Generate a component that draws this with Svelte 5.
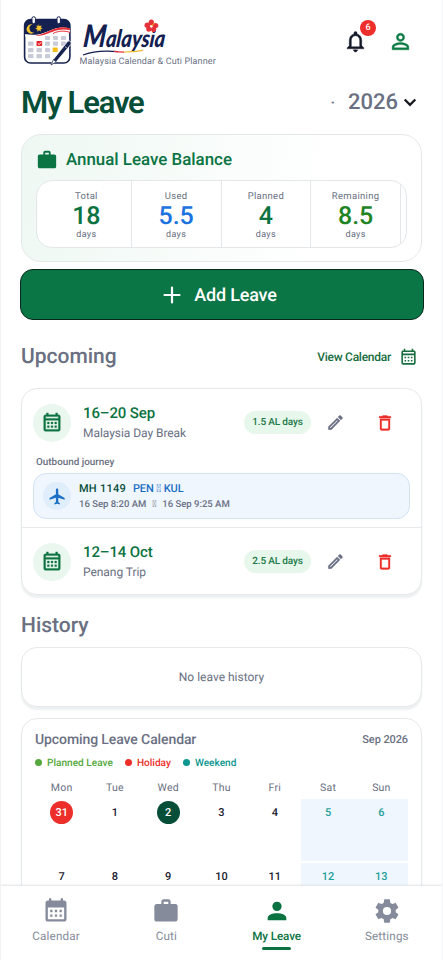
<script lang="ts">
  const icons = {
    calendar:
      'M7 11H9V13H7V11M21 5V19C21 20.11 20.11 21 19 21H5C3.89 21 3 20.1 3 19V5C3 3.9 3.9 3 5 3H6V1H8V3H16V1H18V3H19C20.11 3 21 3.9 21 5M5 7H19V5H5V7M19 19V9H5V19H19M15 13V11H17V13H15M11 13V11H13V13H11M7 15H9V17H7V15M15 17V15H17V17H15M11 17V15H13V17H11Z',
    calendarSolid:
      'M19 3H18V1H16V3H8V1H6V3H5C3.89 3 3 3.9 3 5V19C3 20.1 3.89 21 5 21H19C20.1 21 21 20.1 21 19V5C21 3.9 20.1 3 19 3M19 19H5V9H19V19M7 11H9V13H7V11M11 11H13V13H11V11M15 11H17V13H15V11M7 15H9V17H7V15M11 15H13V17H11V15M15 15H17V17H15V15Z',
    briefcase:
      'M10 2H14A2 2 0 0 1 16 4V6H20A2 2 0 0 1 22 8V19A2 2 0 0 1 20 21H4C2.89 21 2 20.1 2 19V8C2 6.89 2.89 6 4 6H8V4C8 2.89 8.89 2 10 2M14 6V4H10V6H14Z',
    bell: 'M12 22c1.1 0 2-.9 2-2h-4c0 1.1.9 2 2 2zm6-6v-5c0-3.07-1.63-5.64-4.5-6.32V4c0-.83-.67-1.5-1.5-1.5s-1.5.67-1.5 1.5v.68C7.64 5.36 6 7.92 6 11v5l-2 2v1h16v-1l-2-2zm-2 1H8v-6c0-2.48 1.51-4.5 4-4.5s4 2.02 4 4.5v6z',
    personOutline:
      'M12 5.9c1.16 0 2.1.94 2.1 2.1s-.94 2.1-2.1 2.1S9.9 9.16 9.9 8s.94-2.1 2.1-2.1m0 9c2.97 0 6.1 1.46 6.1 2.1v1.1H5.9V17c0-.64 3.13-2.1 6.1-2.1M12 4C9.79 4 8 5.79 8 8s1.79 4 4 4 4-1.79 4-4-1.79-4-4-4zm0 9c-2.67 0-8 1.34-8 4v3h16v-3c0-2.66-5.33-4-8-4z',
    person:
      'M12 4a4 4 0 1 1 0 8 4 4 0 0 1 0-8m0 10c4.42 0 8 1.79 8 4v2H4v-2c0-2.21 3.58-4 8-4z',
    pencil:
      'M14.06 9L15 9.94L5.92 19H5V18.08L14.06 9M17.66 3C17.41 3 17.15 3.1 16.96 3.29L15.13 5.12L18.88 8.87L20.71 7.04C21.1 6.65 21.1 6 20.71 5.63L18.37 3.29C18.17 3.09 17.92 3 17.66 3M14.06 6.19L3 17.25V21H6.75L17.81 9.94L14.06 6.19Z',
    trash:
      'M6 19c0 1.1.9 2 2 2h8c1.1 0 2-.9 2-2V7H6v12M8 9h8v10H8V9m7.5-5-1-1h-5l-1 1H5v2h14V4h-3.5z',
    plane:
      'M21 16v-2l-8-5V3.5c0-.83-.67-1.5-1.5-1.5S10 2.67 10 3.5V9l-8 5v2l8-2.5V19l-2 1.5V22l3.5-1 3.5 1v-1.5L13 19v-5.5l8 2.5z',
    cog: 'M12 15.5A3.5 3.5 0 0 1 8.5 12A3.5 3.5 0 0 1 12 8.5A3.5 3.5 0 0 1 15.5 12A3.5 3.5 0 0 1 12 15.5M19.43 12.97C19.47 12.65 19.5 12.33 19.5 12C19.5 11.67 19.47 11.34 19.43 11L21.54 9.37C21.73 9.22 21.78 8.95 21.66 8.73L19.66 5.27C19.54 5.05 19.27 4.96 19.05 5.05L16.56 6.05C16.04 5.66 15.5 5.32 14.87 5.07L14.5 2.42C14.46 2.18 14.25 2 14 2H10C9.75 2 9.54 2.18 9.5 2.42L9.13 5.07C8.5 5.32 7.96 5.66 7.44 6.05L4.95 5.05C4.73 4.96 4.46 5.05 4.34 5.27L2.34 8.73C2.21 8.95 2.27 9.22 2.46 9.37L4.57 11C4.53 11.34 4.5 11.67 4.5 12C4.5 12.33 4.53 12.65 4.57 12.97L2.46 14.63C2.27 14.78 2.21 15.05 2.34 15.27L4.34 18.73C4.46 18.95 4.73 19.03 4.95 18.95L7.44 17.94C7.96 18.34 8.5 18.68 9.13 18.93L9.5 21.58C9.54 21.82 9.75 22 10 22H14C14.25 22 14.46 21.82 14.5 21.58L14.87 18.93C15.5 18.67 16.04 18.34 16.56 17.94L19.05 18.95C19.27 19.03 19.54 18.95 19.66 18.73L21.66 15.27C21.78 15.05 21.73 14.78 21.54 14.63L19.43 12.97Z'
  };

  const sep = '\uE000';

  const balance = [
    { label: 'Total', value: '18', tone: 'green' },
    { label: 'Used', value: '5.5', tone: 'blue' },
    { label: 'Planned', value: '4', tone: 'green' },
    { label: 'Remaining', value: '8.5', tone: 'lime' }
  ];

  const leaves = [
    {
      dates: '16–20 Sep',
      title: 'Malaysia Day Break',
      days: '1.5 AL days',
      flight: {
        code: 'MH 1149',
        from: 'PEN',
        to: 'KUL',
        departs: '16 Sep 8:20 AM',
        arrives: '16 Sep 9:25 AM'
      }
    },
    { dates: '12–14 Oct', title: 'Penang Trip', days: '2.5 AL days', flight: null }
  ];

  const legend = [
    { label: 'Planned Leave', tone: 'planned' },
    { label: 'Holiday', tone: 'holiday' },
    { label: 'Weekend', tone: 'weekend' }
  ];

  const weekdays = ['Mon', 'Tue', 'Wed', 'Thu', 'Fri', 'Sat', 'Sun'];
  const days = [31, 1, 2, 3, 4, 5, 6, 7, 8, 9, 10, 11, 12, 13];

  const tabs = [
    { label: 'Calendar', icon: icons.calendarSolid },
    { label: 'Cuti', icon: icons.briefcase },
    { label: 'My Leave', icon: icons.person },
    { label: 'Settings', icon: icons.cog }
  ];
  let activeTab = 'My Leave';
</script>

{#snippet icon(path: string, size: number)}
  <svg class="icon" width={size} height={size} viewBox="0 0 24 24" aria-hidden="true">
    <path d={path} fill="currentColor" fill-rule="evenodd" />
  </svg>
{/snippet}

<div class="app">
  <main>
    <header>
      <svg class="logo" width="50" height="52" viewBox="0 0 50 52" aria-hidden="true">
        <rect x="1.6" y="3.6" width="45.3" height="43.4" rx="6" fill="#fff" stroke="#17234f" stroke-width="1.6" />
        <path d="M1.6 18V9.6a6 6 0 0 1 6-6h33.3a6 6 0 0 1 6 6V13C37 10 31 13 24 16S9 19.500 1.600 18z" fill="#14204f" />
        <path d="M2 18.500C12 20.500 19 18 26 15S40 10 47 13V16C39 13 33 16 26 18.500S11 22 2 20.500z" fill="#fff" />
        <path d="M12 19.600C20 18.500 25 15 31 13S42 10.500 47 12.500V14.300C41 12.600 36 13.500 31 15.200S20 20.500 12 19.600z" fill="#e5323a" />
        <path d="M30 17.500C36 14.500 42 14.500 47 16.500" fill="none" stroke="#e5323a" stroke-width="1" />
        <path d="M9.500 8.600a4.600 4.600 0 1 0 2 7.700a3.900 3.900 0 1 1-2-7.700z" fill="#f4c330" />
        <path d="M15.500 8l1 2.100 2.200-.7-.9 2.100 2 1.100-2.200.7.300 2.300-1.900-1.400-1.700 1.500.1-2.300-2.200-.6 2-1.200-.9-2.100 2.200.6z" fill="#f4c330" />
        <g fill="#fff" stroke="#14204f" stroke-width="1">
          <rect x="9" y=".7" width="3.400" height="7" rx="1.700" />
          <rect x="34" y=".7" width="3.400" height="7" rx="1.700" />
        </g>
        <g fill="#c9ccd6">
          <rect x="22" y="20" width="5" height="4" rx=".7" />
          <rect x="30" y="20" width="5" height="4" rx=".7" />
          <rect x="38" y="20" width="5" height="4" rx=".7" />
          <rect x="5" y="25.500" width="5.500" height="4.300" rx=".7" />
          <rect x="22" y="25.500" width="5" height="4.300" rx=".7" />
          <rect x="30" y="25.500" width="5" height="4.300" rx=".7" />
          <rect x="38" y="25.500" width="5" height="4.300" rx=".7" />
          <rect x="5" y="32" width="5.500" height="4.300" rx=".7" />
          <rect x="13.500" y="32" width="5.500" height="4.300" rx=".7" />
          <rect x="22" y="32" width="5" height="4.300" rx=".7" />
          <rect x="5" y="38" width="5.500" height="4.300" rx=".7" />
          <rect x="13.500" y="38" width="5.500" height="4.300" rx=".7" />
          <rect x="22" y="38" width="5" height="4.300" rx=".7" />
        </g>
        <rect x="13.500" y="25" width="5.700" height="5" rx=".7" fill="#e5232d" />
        <path d="M14.900 27.400l1.300 1.200 2-2.300" fill="none" stroke="#fff" stroke-width=".9" />
        <rect x="29.700" y="31.500" width="5" height="4.600" rx=".7" fill="#f6bd16" />
        <path d="M28 49l2.500-5.800L44.500 25.500q1.600-1.500 3 0t.3 3L33.500 45.500z" fill="#17234f" stroke="#fff" stroke-width=".8" />
        <path d="M28 49l2.500-5.500 2.700 2.300z" fill="#fff" stroke="#17234f" stroke-width=".7" />
        <path d="M42 30.500l2.700 2.300" stroke="#aeb6cf" stroke-width="1" />
      </svg>
      <div class="brand">
        <svg class="brand-mark" width="92" height="38" viewBox="0 0 92 38" aria-hidden="true">
          <text class="wordmark" x="5" y="28" transform="translate(2.500 0) skewX(-6)" textLength="82" lengthAdjust="spacingAndGlyphs"><tspan class="initial">M</tspan>alaysia</text>
          <path d="M5 36C16 31.500 28 31.500 40 32.600" fill="none" stroke="#14204f" stroke-width="1.300" />
          <path d="M36 32.300q5 .7 10 .8" fill="none" stroke="#e5323a" stroke-width="1.200" />
          <path d="M46 33q10 0 19-1.700" fill="none" stroke="#f0b92d" stroke-width="1.200" />
          <g fill="#e5323a">
            <ellipse cx="73.300" cy="3.600" rx="2.600" ry="3.200" />
            <ellipse cx="77.300" cy="6.500" rx="3" ry="2.600" />
            <ellipse cx="75.600" cy="10.200" rx="2.600" ry="2.800" />
            <ellipse cx="70.800" cy="10" rx="2.600" ry="2.800" />
            <ellipse cx="69.500" cy="6.200" rx="3" ry="2.600" />
          </g>
          <circle cx="73.300" cy="7.300" r="1.300" fill="#fff" />
          <path d="M73.300 7.300l3-3.200" stroke="#f6bd16" stroke-width="1" />
        </svg>
        <span>Malaysia Calendar &amp; Cuti Planner</span>
      </div>
      <div class="actions">
        <div class="bell">
          {@render icon(icons.bell, 25)}
          <span class="badge">6</span>
        </div>
        <div class="profile">{@render icon(icons.personOutline, 25)}</div>
      </div>
    </header>

    <div class="title-row">
      <h1>My Leave</h1>
      <div class="year">
        <span class="dot">·</span>
        <span>2026</span>
        <svg width="14" height="9" viewBox="0 0 14 9" aria-hidden="true">
          <path d="M1.700 1.500L7 6.800l5.300-5.300" fill="none" stroke="#15181f" stroke-width="2.300" />
        </svg>
      </div>
    </div>

    <section class="balance">
      <h2>{@render icon(icons.briefcase, 22)}Annual Leave Balance</h2>
      <div class="stats">
        {#each balance as item (item.label)}
          <div class="stat">
            <span class="stat-label">{item.label}</span>
            <strong class={item.tone}>{item.value}</strong>
            <span class="stat-unit">days</span>
          </div>
        {/each}
      </div>
    </section>

    <button class="add">
      <svg width="18" height="18" viewBox="0 0 18 18" aria-hidden="true">
        <path d="M9 1.500v15M1.500 9h15" stroke="#fff" stroke-width="2.200" stroke-linecap="round" />
      </svg>
      Add Leave
    </button>

    <div class="section-head">
      <h2>Upcoming</h2>
      <a href="#calendar">View Calendar {@render icon(icons.calendar, 19)}</a>
    </div>

    <section class="card leaves">
      {#each leaves as leave (leave.dates)}
        <article>
          <div class="leave">
            <div class="leave-icon">{@render icon(icons.calendar, 22)}</div>
            <div class="leave-text">
              <h3>{leave.dates}</h3>
              <p>{leave.title}</p>
            </div>
            <span class="pill">{leave.days}</span>
            <span class="edit">{@render icon(icons.pencil, 19)}</span>
            <span class="delete">{@render icon(icons.trash, 20)}</span>
          </div>
          {#if leave.flight}
            <p class="journey-label">Outbound journey</p>
            <div class="journey">
              <div class="plane">{@render icon(icons.plane, 19)}</div>
              <div>
                <p class="route"><b>{leave.flight.code}</b>{leave.flight.from} {sep} {leave.flight.to}</p>
                <p class="times">{leave.flight.departs} <i>{sep}</i> {leave.flight.arrives}</p>
              </div>
            </div>
          {/if}
        </article>
      {/each}
    </section>

    <div class="section-head history">
      <h2>History</h2>
    </div>
    <section class="card empty">No leave history</section>

    <section class="card month">
      <div class="month-head">
        <h3>Upcoming Leave Calendar</h3>
        <span>Sep 2026</span>
      </div>
      <div class="legend">
        {#each legend as item (item.label)}
          <span class={item.tone}>{item.label}</span>
        {/each}
      </div>
      <div class="grid weekdays">
        {#each weekdays as name (name)}
          <span>{name}</span>
        {/each}
      </div>
      <div class="grid">
        {#each days as day, index (index)}
          <div class="day" class:off={index % 7 > 4} class:holiday-day={day === 31} class:today={day === 2}>
            <span>{day}</span>
          </div>
        {/each}
      </div>
    </section>
  </main>

  <nav>
    {#each tabs as tab (tab.label)}
      <div class="tab" class:active={tab.label === activeTab}>
        {@render icon(tab.icon, 28)}
        <span>{tab.label}</span>
      </div>
    {/each}
  </nav>
</div>

<style>
  :global(body) {
    background: #fff;
  }

  .app {
    display: flex;
    flex-direction: column;
    box-sizing: border-box;
    height: 960px;
    border-left: 1px solid #f1f2f4;
    border-right: 1px solid #f4f5f6;
    font-family: Roboto, 'Liberation Sans', sans-serif;
    font-weight: 500;
    color: #6a7082;
    overflow: hidden;
    text-rendering: geometricPrecision;
  }

  main {
    flex: 1;
    min-height: 0;
    overflow: hidden;
    padding: 0 20px;
  }

  h1,
  h2,
  h3,
  p {
    margin: 0;
    font-weight: 500;
  }

  .icon {
    display: block;
    flex: none;
  }

  /* outlined icons are drawn slightly heavier than their base paths */
  .bell .icon,
  .profile .icon,
  .edit .icon,
  .delete .icon,
  .leave-icon .icon {
    stroke: currentColor;
    stroke-width: 0.4;
  }

  header {
    display: flex;
    height: 80px;
    box-sizing: border-box;
    padding: 16px 0 0 3px;
  }

  .logo {
    flex: none;
    margin-left: -1px;
  }

  .brand {
    display: flex;
    flex-direction: column;
    width: 150px;
    padding-left: 5px;
    padding-top: 3px;
  }

  .brand-mark {
    overflow: visible;
  }

  .brand span {
    font-size: 9px;
    font-weight: 400;
    line-height: 10px;
    letter-spacing: 0.12px;
    white-space: nowrap;
    padding-left: 1.500px;
    margin-top: 0;
  }

  .wordmark {
    font-family: Lato, sans-serif;
    font-size: 24px;
    font-style: italic;
    font-weight: 900;
    fill: #14204f;
  }

  .initial {
    font-size: 31px;
  }

  .actions {
    display: flex;
    margin-left: auto;
    color: #131826;
  }

  .bell {
    position: relative;
    padding-top: 13px;
    margin-right: 20px;
  }

  .badge {
    position: absolute;
    left: 17px;
    top: 4px;
    width: 16px;
    height: 16px;
    border-radius: 50%;
    background: #ec2f2b;
    color: #fff;
    font-size: 9px;
    line-height: 16px;
    text-align: center;
  }

  .profile {
    padding: 13px 9px 0 0;
    color: #0b7a43;
  }

  .title-row {
    display: flex;
    justify-content: space-between;
    height: 54px;
  }

  h1 {
    font-size: 31px;
    line-height: 45px;
    letter-spacing: -1.2px;
    color: #064e38;
    font-weight: 600;
  }

  .year {
    display: flex;
    align-items: center;
    height: 44px;
    font-size: 22px;
    margin-right: 5px;
  }

  .year .dot {
    margin-right: 13px;
    font-size: 16px;
  }

  .year svg {
    margin-left: 5px;
  }

  .balance {
    box-sizing: border-box;
    height: 128px;
    padding: 14px 14px 0;
    border: 1px solid #e4e9e8;
    border-radius: 20px;
    background: linear-gradient(100deg, #eef8f3, #fff 75%);
  }

  .balance h2 {
    display: flex;
    align-items: center;
    gap: 8px;
    height: 21px;
    font-size: 16.900px;
    color: #0a7443;
  }

  .stats {
    display: flex;
    box-sizing: border-box;
    height: 68px;
    margin-top: 10px;
    padding: 0 5px;
    border: 1px solid #e4e7ea;
    border-radius: 16px;
    background: #fff;
    overflow: hidden;
  }

  .stat {
    display: flex;
    flex: 1;
    flex-direction: column;
    align-items: center;
    border-right: 1px solid #e4e7ea;
    font-size: 9.500px;
    font-weight: 400;
    letter-spacing: 0.3px;
  }

  .stat-label {
    margin-top: 9px;
    line-height: 13px;
  }

  .stat strong {
    font-size: 25px;
    font-weight: 500;
    line-height: 27px;
    letter-spacing: 0;
  }

  .stat-unit {
    font-size: 9px;
    line-height: 11px;
  }

  .green {
    color: #0b7341;
  }

  .blue {
    color: #1b73df;
  }

  .lime {
    color: #218424;
  }

  .add {
    display: flex;
    align-items: center;
    justify-content: center;
    gap: 13px;
    box-sizing: border-box;
    width: calc(100% + 3px);
    height: 51px;
    margin: 7px -1px 0;
    padding: 1px 4px 0 0;
    border: 1px solid #06291b;
    border-radius: 13px;
    background: #0a7545;
    color: #fff;
    font: 500 18px Roboto, sans-serif;
    letter-spacing: -0.2px;
    text-rendering: inherit;
  }

  .section-head {
    display: flex;
    justify-content: space-between;
    align-items: center;
    height: 68px;
    padding-top: 6px;
    box-sizing: border-box;
  }

  .section-head h2 {
    font-size: 21px;
  }

  .section-head a {
    display: flex;
    align-items: center;
    gap: 8px;
    margin-right: 4px;
    font-size: 12px;
    letter-spacing: -0.25px;
    color: #176d3e;
    text-decoration: none;
  }

  .card {
    box-sizing: border-box;
    border: 1px solid #e6e8eb;
    border-radius: 16px;
    background: #fff;
    box-shadow: 0 3px 2px #edf0f0;
  }

  .leaves {
    height: 207px;
  }

  .leaves article + article {
    border-top: 1px solid #e6e8eb;
  }

  .leave {
    display: flex;
    align-items: center;
    height: 67px;
    padding: 0 26px 0 11px;
  }

  .leave-icon,
  .plane {
    display: flex;
    align-items: center;
    justify-content: center;
    width: 38px;
    height: 38px;
    border-radius: 50%;
    background: #e9f7ee;
    color: #0b7341;
  }

  .leave-text {
    flex: 1;
    margin: 1px 0 0 12px;
  }

  .leave-text h3 {
    font-size: 15px;
    line-height: 20px;
    letter-spacing: -0.1px;
    color: #0b7341;
  }

  .leave-text p {
    font-size: 12px;
    line-height: 21px;
    font-weight: 400;
    letter-spacing: -0.05px;
  }

  .pill {
    width: 67px;
    border-radius: 12px;
    background: #e8f7ec;
    color: #1b7a48;
    font-size: 10px;
    line-height: 23px;
    letter-spacing: -0.15px;
    text-align: center;
  }

  .edit {
    margin: 0 30px 0 15px;
  }

  .delete {
    color: #ec2f2b;
  }

  .journey-label {
    margin: 0 0 0 14px;
    font-size: 9.900px;
    line-height: 14px;
  }

  .journey {
    display: flex;
    align-items: center;
    box-sizing: border-box;
    height: 46px;
    margin: 3px 11px 8px;
    padding-left: 9px;
    border: 1px solid #d3e3f4;
    border-radius: 13px;
    background: #eff6fe;
  }

  .plane {
    width: 28px;
    height: 28px;
    margin-right: 8px;
    background: #e0edfb;
    color: #1a6fc4;
  }

  .route {
    font-size: 11px;
    line-height: 17px;
    letter-spacing: -0.1px;
    color: #1a6fc4;
  }

  .route b {
    margin-right: 7px;
    font-weight: 500;
    letter-spacing: 0.25px;
    color: #064e38;
  }

  .times {
    font-size: 9.500px;
    line-height: 16px;
  }

  .times i {
    margin: 0 3.500px;
    font-style: normal;
  }

  .history {
    height: 52px;
    padding-top: 9px;
  }

  .empty {
    display: flex;
    align-items: center;
    justify-content: center;
    height: 60px;
    font-size: 12px;
    font-weight: 400;
    letter-spacing: 0;
  }

  .month {
    height: 210px;
    margin-top: 11px;
    padding: 9px 13px 0;
  }

  .month-head {
    display: flex;
    justify-content: space-between;
    align-items: center;
    height: 23px;
    font-size: 11px;
    letter-spacing: -0.1px;
  }

  .month-head h3 {
    font-size: 14px;
  }

  .legend {
    display: flex;
    gap: 12px;
    height: 24px;
    align-items: center;
    font-size: 10.100px;
  }

  .legend span::before {
    content: '';
    display: inline-block;
    width: 7px;
    height: 7px;
    margin-right: 5px;
    border-radius: 50%;
    background: currentColor;
  }

  .planned {
    color: #55a83b;
  }

  .holiday {
    color: #ec2f2b;
  }

  .weekend {
    color: #0b9690;
  }

  .grid {
    display: grid;
    grid-template-columns: repeat(7, 1fr);
    row-gap: 2px;
    text-align: center;
  }

  .weekdays {
    height: 24px;
    font-size: 10.500px;
    font-weight: 400;
    line-height: 25px;
    letter-spacing: 0.2px;
  }

  .day {
    height: 62px;
    padding-top: 2px;
    box-sizing: border-box;
    font-size: 11px;
    color: #1a2030;
  }

  .day span {
    display: block;
    width: 23px;
    margin: 0 auto;
    border-radius: 50%;
    line-height: 23px;
  }

  .off {
    background: #eff6fd;
    color: #1f9f9a;
  }

  .holiday-day span {
    background: #ec2f2b;
    color: #fff;
  }

  .today span {
    background: #064e38;
    color: #fff;
  }

  nav {
    position: relative;
    display: flex;
    height: 74px;
    background: #fff;
    box-shadow: 0 -1px 2px #dfe2e5;
  }

  .tab {
    display: flex;
    flex: 1;
    flex-direction: column;
    align-items: center;
    padding-top: 11px;
    color: #858b9a;
    font-size: 11.700px;
    font-weight: 400;
    letter-spacing: 0.15px;
  }

  .tab span {
    margin-top: 3px;
    line-height: 16px;
  }

  .active {
    color: #0b7341;
    font-weight: 500;
    letter-spacing: -0.1px;
  }

  .active::after {
    content: '';
    width: 29px;
    height: 3px;
    margin-top: 3px;
    border-radius: 2px;
    background: #0b7341;
  }
</style>
